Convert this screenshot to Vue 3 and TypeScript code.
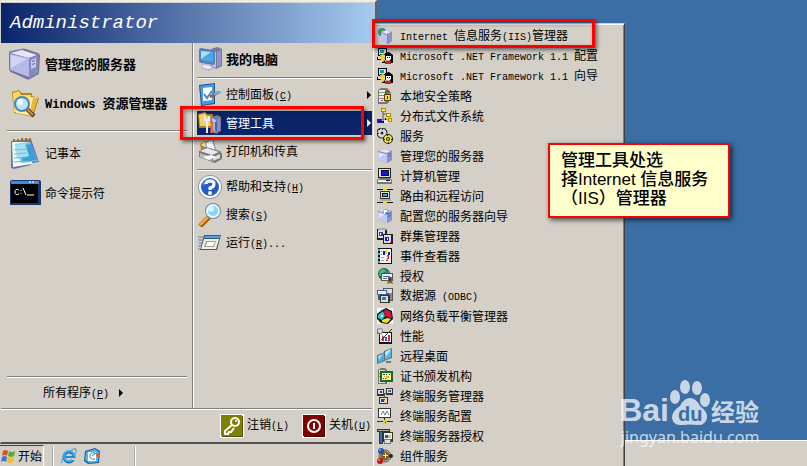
<script setup lang="ts">
import { defineComponent, h } from 'vue'

type Shape = [fill: string, d: string, stroke?: string, width?: number]

const rect = (x: number, y: number, w: number, ht: number) => `M${x} ${y}h${w}v${ht}h${-w}z`
const circle = (x: number, y: number, r: number) =>
  `M${x - r} ${y}a${r} ${r} 0 1 0 ${2 * r} 0a${r} ${r} 0 1 0 ${-2 * r} 0z`

const tower: Shape[] = [
  ['#8583a8', 'M1 3l7-2 7 2v9l-5 3-9-3z'],
  ['#e4e6fb', 'M1 3l7-2 6 2-4 2z'],
  ['#c4c8f0', 'M1 4l9 2v9l-9-3z'],
  ['#8d90cf', 'M10 5l5-2v9l-5 3z'],
  ['#e2e4fb', 'M2 5l6 1-6 4z'],
  ['#6467ae', 'M11 6l3-1v1l-3 1zM11 8l3-1v1l-3 1z'],
]

const small: Record<string, Shape[]> = {
  iis: [
    ['#2a77c9', circle(5, 4, 4)],
    ['#3da53a', 'M1 3l3-3 3 2-2 3-3 1z'],
    ['#8583a8', 'M4 4l6-2 5 2v9l-4 3-7-3z'], ['#e4e6fb', 'M4 4l6-2 4 2-4 2z'],
    ['#bec2ee', 'M4 5l6 2v9l-6-3z'], ['#8d90cf', 'M11 6l4-2v9l-4 3z'],
  ],
  net: [
    ['#000', rect(1, 0, 9, 8)], ['#ddd', rect(2, 1, 7, 6)], ['#08a0a8', rect(3, 2, 4, 3)],
    ['#000', 'M0 9h3V6h5v9H5v-3H0z'], ['#f4d331', 'M3 7l3-1 2 1v5l-2 2H4z'], ['#ddd', rect(1, 9, 3, 2)],
    ['#000', 'M8 5l4-1 4 3v8h-2l-2-2-4-1z'], ['#fff', 'M9 8h5v3l-2 2-3-1z'],
    ['#000', 'M10 9h1v1h-1zM12 9h1v1h-1z'], ['#d71920', 'M9 13h5v3H8v-2z'],
  ],
  security: [
    ['#777', 'M1 2l3-2h6l2 2v12l-2 2H1z'], ['#eee', rect(2, 2, 6, 12)],
    ['#888', 'M2 4h6v1H2zM2 7h6v1H2zM2 10h6v1H2z'], ['#e02020', rect(4, 12, 2, 1)],
    ['none', 'M9 7V4q2-3 4 0v3', '#554600', 1], ['#554600', rect(7, 6, 7, 7)],
    ['#f5dc45', rect(8, 7, 5, 5)], ['#222', rect(10, 8, 1, 3)],
  ],
  dfs: [
    ['none', 'M6 3v9M6 6h5M6 12h6', '#555', 1], ['#ad8d00', 'M4 0h5v4H4zM9 5h5v4H9zM11 10h4v4h-4z'],
    ['#fff047', 'M5 1h3v2H5zM10 6h3v2h-3zM12 11h2v2h-2z'], ['#1515c9', rect(0, 11, 5, 4)],
    ['#111', 'M5 13h3v-3h1v3h3v2H5z'], ['#eee', 'M7 12h3l2 2v1H7z'],
  ],
  services: [
    ['none', circle(5, 5, 3), '#222', 5], ['none', circle(5, 5, 3), '#ddd', 3], ['#222', circle(5, 5, 1)],
    ['#222', 'M5 0h1v2H5zM0 5h2v1H0zM2 1h1v1H2zM8 1h1v1H8z'],
    ['none', circle(11, 11, 3), '#222', 4], ['none', circle(11, 11, 3), '#f4e62a', 2],
    ['#222', 'M10 6h1v2h-1zM6 11h2v1H6zM14 11h2v1h-2zM11 14h1v2h-1z'],
  ],
  server: tower,
  computer: [
    ['#222', rect(1, 0, 13, 10)], ['#ddd', rect(2, 1, 11, 8)], ['#111', rect(4, 2, 8, 6)], ['#1218d7', rect(5, 3, 6, 4)],
    ['#777', 'M3 10h10l2 2v4H0v-4z'], ['#eee', rect(1, 12, 13, 2)], ['#111', rect(9, 12, 4, 1)], ['#20b34a', rect(2, 14, 2, 1)],
  ],
  routing: [
    ['#111', 'M0 1h16v1H0zM0 14h16v1H0zM8 2h1v12H8z'], ['#e9df28', 'M6 0h4v3H6zM6 13h4v3H6z'],
    ['#333', rect(3, 3, 10, 8)], ['#ddd', rect(4, 4, 8, 6)], ['#111', rect(5, 5, 6, 4)], ['#2fb8b8', rect(6, 6, 4, 2)],
    ['#aaa', rect(3, 11, 11, 2)],
  ],
  wizard: [...tower, ['#64b3e1', circle(9, 4, 3)], ['#fff', 'M7 2h3v2H8v2H7z'], ['#2a78b5', 'M9 5h3v1H9z']],
  cluster: [
    ['#222', rect(0, 1, 10, 11)], ['#ddd', rect(1, 2, 7, 8)], ['#2c42a8', rect(2, 4, 4, 4)], ['#aaa', 'M1 2l2-2h7v2z'],
    ['#222', rect(6, 6, 10, 10)], ['#ddd', rect(7, 7, 7, 8)], ['#171fbc', rect(8, 9, 4, 4)], ['#fff', rect(3, 5, 1, 2)],
    ['#fff', rect(10, 10, 1, 2)], ['#d22', rect(13, 14, 1, 1)],
  ],
  events: [
    ['#111', rect(1, 0, 14, 16)], ['#fff', rect(3, 1, 11, 14)],
    ['#31aaba', 'M1 1h2v2H1zM1 5h2v2H1zM1 9h2v2H1zM1 13h2v2H1z'], ['#1717c7', 'M6 3h2v4H6zM11 4h2v3h-2z'],
    ['#e7d500', 'M8 2h2v4H8zM9 11h2v2H9z'], ['#d31515', 'M10 7h2v4h-2v-1h1zM9 12h2v1H9z'],
    ['#999', 'M4 3h1v1H4zM4 6h1v1H4zM4 9h3v1H4zM4 12h3v1H4z'],
  ],
  license: [
    ['#176945', circle(7, 6, 6)], ['#55bd71', 'M3 2l4-1 2 2-3 2-1 4-3-2z'], ['#2789b1', 'M9 1l3 3-2 3-2-2z'],
    ['#555', rect(4, 5, 12, 8)], ['#eef4fa', rect(5, 6, 10, 6)], ['#5465aa', 'M6 8h7v1H6zM6 10h4v1H6z'],
    ['#886600', 'M11 9h4v4l1 3-3-1-3 1 1-3z'], ['#24346d', rect(12, 10, 2, 3)],
  ],
  odbc: [
    ['#555', rect(6, 0, 10, 13)], ['#ddd', rect(7, 1, 8, 4)], ['#888', rect(12, 5, 3, 7)],
    ['#3e5f9b', rect(0, 2, 10, 5)], ['#eef', rect(1, 3, 8, 3)], ['#333', rect(3, 7, 10, 8)],
    ['#ddd', rect(4, 8, 7, 6)], ['#2787bd', rect(5, 9, 4, 3)], ['#e22', rect(12, 13, 1, 1)], ['#555', 'M1 7h2v5H1z'],
  ],
  balance: [
    ['#fff', rect(0, 0, 16, 16)], ['#111', 'M5 2l4-2 6 3 1 8-5 5-7-1-4-4V6z'], ['#28cbd5', 'M1 7l5-4 2 5-3 4-4-2z'],
    ['#d71543', 'M8 1l6 3 1 6-6-1-2-5z'], ['#efe02f', 'M5 12l5-2 4 1-4 4-5-1z'], ['#fff', rect(4, 7, 2, 2)],
  ],
  performance: [
    ['#666', 'M0 1h3l3 3h9v12H2V6H0z'], ['#111', rect(2, 4, 13, 12)], ['#fff', rect(3, 5, 11, 9)],
    ['#d62b2b', 'M5 8h2v5H5zM11 7h2v6h-2z'], ['#2634c8', 'M8 9h2v4H8z'], ['none', 'M3 5l9 9', '#c5b820', 1],
    ['none', 'M4 12l8-8 3-3', '#333', 1], ['#888', circle(3, 3, 3)], ['#ddd', circle(3, 3, 2)],
  ],
  remote: [
    ['#5a7580', 'M7 3l8-3v10l-8 3z'], ['#5db6e4', 'M8 4l6-3v8l-6 3z'], ['#bceaff', 'M8 4l6-3-5 8z'],
    ['#557580', 'M0 7l8-3v9l-8 3z'], ['#4baee1', 'M1 8l6-3v7l-6 3z'], ['#a2dcf7', 'M1 8l5-2-4 6z'], ['#777', rect(9, 13, 5, 2)],
  ],
  cert: [
    ['#777', 'M1 2l3-2h4l2 2v14H1z'], ['#ddd', rect(2, 2, 6, 13)], ['#888', 'M2 5h5v1H2zM2 8h5v1H2z'],
    ['#176b22', rect(3, 3, 13, 11)], ['#fff9ae', rect(5, 5, 9, 7)], ['#333', 'M6 6h2v1H6zM9 6h1v1H9zM12 6h1v1h-1zM6 10h1v1H6zM8 10h1v1H8z'],
    ['#d8bd22', 'M9 8h3v2H9zM7 8h1v1H7z'],
  ],
  tsmanager: [
    ['#333', 'M0 1h7v7H0zM9 0h7v7H9zM2 9h9v7H2z'], ['#ddd', 'M1 2h5v4H1zM10 1h5v4h-5zM3 10h7v5H3z'],
    ['#2937bc', 'M3 3h2v2H3zM11 2h3v2h-3zM4 11h4v3H4z'], ['#3ba047', rect(11, 2, 2, 2)],
    ['#555', 'M6 5h4v1H8v4H7V6H6z'], ['#e5bd29', rect(7, 12, 1, 2)],
  ],
  tsconfig: [
    ['#333', rect(1, 0, 13, 10)], ['#fff', rect(2, 1, 11, 8)], ['none', 'M4 7l2-4 2 4M8 7l2-4 2 4', '#777', 1],
    ['#333', 'M7 10h1v3H7zM0 13h16v1H0z'], ['#ddd438', rect(6, 12, 4, 4)], ['#333', rect(8, 14, 1, 1)],
  ],
  tslicense: [
    ['#333', 'M0 1h13v3H6v12H2V4H0z'], ['#aaa', rect(1, 2, 11, 1)], ['#2c6db8', rect(3, 4, 2, 11)],
    ['#333', rect(6, 4, 10, 10)], ['#eef', rect(7, 5, 8, 6)], ['#2850b1', rect(8, 7, 3, 3)],
    ['#d8cb2d', rect(11, 7, 3, 3)], ['#777', rect(7, 11, 7, 5)], ['#ddd', rect(8, 12, 5, 3)],
  ],
  component: [
    ['none', circle(8, 8, 6), '#555', 1], ['#777', circle(8, 8, 5)], ['#8b5d13', circle(8, 8, 4)],
    ['#fff3a0', 'M8 5h1v2h2v1H9v2H8V8H6V7h2z'], ['#214fa8', circle(4, 3, 3)], ['#bd1717', circle(3, 13, 3)],
    ['#222', circle(14, 8, 2)], ['#89b6ee', circle(3, 2, 1)], ['#ff8a79', circle(2, 12, 1)],
  ],
}

const large: Record<string, Shape[]> = {
  server: [
    ['#77759d', 'M0 5q0-2 2-2L12 1q3-1 5 0l12 4q2 1 2 3l-1 17q0 2-2 2l-7 4q-2 1-4 0L2 24q-2-1-2-3z'],
    ['#e4e6fb', 'M1 5l12-3 15 5-8 3z'], ['#b6b9e5', 'M1 6l19 4v20L1 22z'], ['#8688c4', 'M20 10l9-3v18l-9 5z'],
    ['#d2d4f4', 'M2 7l16 4-16 9z'], ['#c5c8f0', 'M22 12l5-2v9l-5 2z'], ['#6063a0', 'M23 13l3-1v1l-3 1zM23 16l3-1v1l-3 1z'],
    ['#53d352', circle(27, 23, 1)], ['#71719a', 'M1 22l19 7v1L2 24z'],
  ],
  explorer: [
    ['#b98212', 'M3 4l7-2 3 3h10v3l7 2-6 19-19-4z'], ['#fbd967', 'M4 5l6-2 2 4h10l-2 20-15-3z'],
    ['#ffeea5', 'M9 10l20-1-6 19-16-3z'], ['#e8b83a', 'M24 10l5-1-6 19-3-1z'],
    ['#4c84b3', circle(13, 16, 8)], ['#b7e5fc', circle(13, 16, 6)], ['#effbff', circle(11, 14, 3)],
    ['none', 'M18 21l7 7', '#5a3e23', 4], ['none', 'M18 21l6 6', '#c59251', 2],
  ],
  notepad: [
    ['#6673b0', 'M2 4l20-2 8 23-7 1-1 2-17 4-3-1z'], ['#eef9f2', 'M3 5h18l2 22-19 3z'],
    ['#77c4e7', 'M6 7l15-2 8 19-17 2z'], ['#3a9fd7', 'M11 9l11-2 6 16-14 2z'], ['#a5e1f3', 'M6 8l10-2 4 13-12 3z'],
    ['none', 'M5 13l13-1M5 17l13-1M5 21l13-1M5 25l13-1', '#81bdaa', 1],
    ['none', 'M5 5V2M9 5V2M13 4V1M17 4V1M21 4V1', '#9b7524', 2],
  ],
  cmd: [
    ['#16386e', 'M1 5q0-2 2-2h27q2 0 2 2v23H1z'], ['#398de0', rect(2, 4, 28, 3)],
    ['#9ed1ff', 'M20 4h2v2h-2zM23 4h2v2h-2z'], ['#e95b38', rect(26, 4, 3, 2)], ['#000', rect(2, 7, 27, 19)],
    ['none', 'M10 13q-4-2-4 2t4 2M12 13v1M12 16v1M14 11l3 7M18 18h7', '#fff', 1],
  ],
}

const medium: Record<string, Shape[]> = {
  pc: [
    ['#7776a3', 'M13 2l6-2 5 2v17l-6 3-5-3z'], ['#bdc0ea', 'M14 3l4 2v16l-4-2z'], ['#9194ca', 'M19 5l4-2v15l-4 2z'],
    ['#5781b5', 'M1 3q0-2 2-2l12 2q2 0 2 2v11q0 2-2 2L3 16q-2 0-2-2z'], ['#4ca6eb', 'M3 4l12 1v10L3 13z'],
    ['#a7def9', 'M3 4l10 1-10 7z'], ['#b4b5c8', 'M4 17l9 1 3 3-5 3-8-3z'], ['#eef', 'M5 18l7 1 2 2-4 1-6-2z'],
  ],
  control: [
    ['#195497', 'M1 2l16-2v21L3 23z'], ['#4d9cda', 'M2 3l14-2v19L4 22z'], ['#fff', 'M5 5l9-1v13l-9 1z'],
    ['none', 'M6 11l3 4 5-7', '#4d88c7', 2], ['none', 'M12 14l9-5', '#c35325', 3], ['none', 'M16 11l7-2', '#65b8eb', 2],
  ],
  tools: [
    ['#b0801f', 'M0 3l7-2 2 2h6v14H1z'], ['#f6cf64', 'M1 4l6-2 2 3h5v10H2z'], ['#7675a5', 'M14 6l5-2 4 2v14l-5 3-5-3z'],
    ['#b8bce9', 'M14 7l4 2v12l-4-2z'], ['#888bc5', 'M19 9l3-2v12l-3 2z'],
    ['none', 'M9 9v13M7 5v4h4V5', '#e9edf2', 2], ['none', 'M14 11v11', '#df7040', 3], ['none', 'M13 5v7', '#555', 1],
    ['none', 'M18 11v9', '#2b6caf', 2],
  ],
  printer: [
    ['#ad8840', 'M2 5l4-3 4 1v8H3z'], ['#ffe395', 'M3 6l3-3 3 1v5z'], ['#718ba8', 'M7 3l8-3 3 11-9 2z'], ['#fff', 'M8 4l6-3 3 10-7 1z'],
    ['#777', 'M1 12l7-4 14 4 2 3v5l-7 4-16-6z'], ['#e9e9e9', 'M2 12l7-3 12 4-7 3z'], ['#bbb', 'M2 14l12 4v4L2 18z'],
    ['#ddd', 'M15 18l7-3v4l-7 3z'], ['#fff', 'M5 18l8-2 5 2-8 3z'],
  ],
  help: [
    ['#8c98ad', circle(12, 12, 12)], ['#fff', circle(12, 12, 11)], ['#245bc8', circle(12, 12, 9)],
    ['#5c8fea', 'M5 8q7-8 14 0-6-3-14 3z'],
    ['none', 'M8 9q0-3 4-3t4 3-4 4v2', '#fff', 3], ['#fff', circle(12, 18, 2)],
  ],
  search: [
    ['none', 'M11 14l-9 9', '#92541a', 5], ['none', 'M10 14l-8 8', '#f5a73c', 3],
    ['#74869b', circle(15, 8, 8)], ['#e5faff', circle(15, 8, 7)], ['#8bd2f4', circle(15, 8, 5)], ['#d4f5ff', circle(13, 6, 3)],
  ],
  run: [
    ['none', 'M0 6h6M0 9h5M1 12h5M0 15h4M0 18h3', '#6e7f94', 1], ['#365e8a', 'M6 4h17l-4 15H2z'],
    ['#4fa2e6', 'M7 5h15v2H6z'], ['#f2eee0', 'M6 8h15l-3 10H3z'], ['#a5a08f', 'M8 10h10l-2 6H6z'], ['#fff', 'M9 11h8l-2 4H8z'],
  ],
  key: [
    ['#fff', rect(0, 0, 24, 24)], ['#53530a', rect(2, 2, 21, 21)], ['#808000', rect(1, 1, 21, 21)],
    ['none', 'M12 11l-7 6v3h3l1-2h2l3-4', '#fff', 2], ['none', circle(15, 8, 4), '#fff', 2], ['#fff', circle(16, 7, 1)],
  ],
  power: [
    ['#fff', rect(0, 0, 24, 24)], ['#480000', rect(2, 2, 21, 21)], ['#800000', rect(1, 1, 21, 21)],
    ['none', circle(12, 12, 6), '#fff', 2], ['#fff', rect(11, 9, 2, 6)],
  ],
}

const bar: Record<string, Shape[]> = {
  flag: [
    ['#df5125', 'M3 3q3-2 5 0L7 8Q5 6 2 8z'], ['#58ad34', 'M9 3q3 2 6 0l-1 5q-3 2-6 0z'],
    ['#3976d5', 'M2 9q3-2 5 0l-1 5q-3-2-5 0z'], ['#efbd2d', 'M8 9q3 2 6 0l-1 5q-3 2-6 0z'],
  ],
  ie: [
    ['none', circle(8, 9, 5), '#176ebb', 3], ['none', circle(8, 8, 5), '#40b0ed', 2], ['#248cd5', rect(4, 8, 10, 2)],
    ['#d4d0c8', rect(11, 10, 5, 2)], ['none', 'M1 15Q-1 12 7 5t8-3q1 1-1 4', '#249be2', 1],
  ],
  mail: [
    ['#145f9f', 'M1 3l10-3 5 3-1 12-11 1-4-3z'], ['#54b4e9', 'M2 4l9-3 4 3-1 10-9 1-4-3z'], ['#fff', 'M4 4h8v9H4z'],
    ['none', 'M11 5Q6 4 6 8t5 3M8 8l4-3', '#247fc0', 1], ['#e56125', circle(14, 7, 2)],
  ],
}

const Icon = defineComponent({
  props: { shapes: { type: Array as () => Shape[], required: true }, size: { type: Number, required: true } },
  setup: (p) => () =>
    h('svg', { width: p.size, height: p.size, viewBox: `0 0 ${p.size} ${p.size}`, 'aria-hidden': 'true' },
      p.shapes.map(([fill, d, stroke, width]) => h('path', { fill, d, stroke, 'stroke-width': width }))),
})

/* Splits a label into Latin and Chinese runs; "&" marks the access key. */
const Label = defineComponent({
  props: { text: { type: String, required: true } },
  setup: (p) => () =>
    h('span', { class: 'label' }, (p.text.match(/&.|[\x20-\x25\x27-\x7e]+|[^\x20-\x7e]+/g) ?? []).map((run) =>
      run[0] === '&' ? h('u', { class: 'latin' }, run[1])
        : /^[\x20-\x7e]/.test(run) ? h('span', { class: 'latin' }, run) : run)),
})

const pinned = [
  { icon: 'server', text: '管理您的服务器' },
  { icon: 'explorer', text: 'Windows 资源管理器' },
]
const recent = [
  { icon: 'notepad', text: '记事本' },
  { icon: 'cmd', text: '命令提示符' },
]
const places = [
  [{ icon: 'pc', text: '我的电脑', bold: true }],
  [
    { icon: 'control', text: '控制面板(&C)', arrow: true },
    { icon: 'tools', text: '管理工具', arrow: true, active: true },
    { icon: 'printer', text: '打印机和传真' },
  ],
  [
    { icon: 'help', text: '帮助和支持(&H)' },
    { icon: 'search', text: '搜索(&S)' },
    { icon: 'run', text: '运行(&R)...' },
  ],
] as { icon: string; text: string; bold?: boolean; arrow?: boolean; active?: boolean }[][]

const tools = [
  ['iis', 'Internet 信息服务(IIS)管理器'],
  ['net', 'Microsoft .NET Framework 1.1 配置'],
  ['net', 'Microsoft .NET Framework 1.1 向导'],
  ['security', '本地安全策略'],
  ['dfs', '分布式文件系统'],
  ['services', '服务'],
  ['server', '管理您的服务器'],
  ['computer', '计算机管理'],
  ['routing', '路由和远程访问'],
  ['wizard', '配置您的服务器向导'],
  ['cluster', '群集管理器'],
  ['events', '事件查看器'],
  ['license', '授权'],
  ['odbc', '数据源 (ODBC)'],
  ['balance', '网络负载平衡管理器'],
  ['performance', '性能'],
  ['remote', '远程桌面'],
  ['cert', '证书颁发机构'],
  ['tsmanager', '终端服务管理器'],
  ['tsconfig', '终端服务配置'],
  ['tslicense', '终端服务器授权'],
  ['component', '组件服务'],
]
</script>

<template>
  <div class="desktop">
    <footer class="taskbar">
      <button class="start"><Icon :shapes="bar.flag" :size="16" />开始</button>
      <div class="quick">
        <button aria-label="Internet Explorer"><Icon :shapes="bar.ie" :size="16" /></button>
        <button aria-label="Outlook Express"><Icon :shapes="bar.mail" :size="16" /></button>
      </div>
    </footer>

    <nav class="menu">
      <header>Administrator</header>
      <div class="panes">
        <section class="left">
          <button v-for="i in pinned" :key="i.icon" class="big bold"><Icon :shapes="large[i.icon]" :size="32" /><Label :text="i.text" /></button>
          <hr>
          <button v-for="i in recent" :key="i.icon" class="big"><Icon :shapes="large[i.icon]" :size="32" /><Label :text="i.text" /></button>
          <hr class="last">
          <button class="all"><Label text="所有程序(&P)" /><i class="arrow" /></button>
        </section>
        <section class="right">
          <template v-for="(group, g) in places" :key="g">
            <hr v-if="g">
            <button v-for="i in group" :key="i.icon" class="place" :class="{ bold: i.bold, active: i.active }">
              <Icon :shapes="medium[i.icon]" :size="24" /><Label :text="i.text" /><i v-if="i.arrow" class="arrow" />
            </button>
          </template>
        </section>
      </div>
      <div class="session">
        <button><Icon :shapes="medium.key" :size="24" /><Label text="注销(&L)" /></button>
        <button><Icon :shapes="medium.power" :size="24" /><Label text="关机(&U)" /></button>
      </div>
    </nav>

    <nav class="submenu">
      <button v-for="([icon, text], n) in tools" :key="n"><Icon :shapes="small[icon]" :size="16" /><Label :text="text" /></button>
    </nav>

    <div class="watermark">
      <div class="brand">
        <span>Bai</span>
        <span class="paw">
          <svg width="42" height="46" viewBox="0 0 42 46" aria-hidden="true">
            <ellipse cx="6" cy="17" rx="5" ry="7" />
            <ellipse cx="16" cy="7" rx="5" ry="7" />
            <ellipse cx="28" cy="8" rx="5" ry="7" />
            <ellipse cx="36" cy="20" rx="5" ry="7" />
            <path d="M21 18Q27 18 31 26Q39 32 38 38Q36 46 28 45Q21 44 14 45Q4 46 3 38Q3 31 11 26Q15 18 21 18Z" />
          </svg>
          <b>du</b>
        </span>
        <span class="jy">经验</span>
      </div>
      <div class="url">jingyan.baidu.com</div>
    </div>

    <div class="mark mark-tools" />
    <div class="mark mark-iis" />
    <p class="note">管理工具处选<br>择Internet 信息服务<br>（IIS）管理器</p>
  </div>
</template>

<style>
body {
  margin: 0;
}
</style>

<style scoped>
.desktop {
  position: relative;
  display: flex;
  flex-direction: column;
  justify-content: flex-end;
  height: 100vh;
  overflow: hidden;
  background: #3a6ea5;
  color: #000;
  font: 12px/16px "Noto Sans CJK SC", sans-serif;
}
button {
  display: flex;
  align-items: center;
  margin: 0;
  padding: 0;
  border: 0;
  background: none;
  color: inherit;
  font: inherit;
  text-align: left;
  white-space: pre;
}
svg {
  flex: none;
}
hr {
  align-self: stretch;
  height: 0;
  margin: 0;
  border: solid;
  border-width: 1px 0;
  border-color: #808080 transparent #fff;
}
:deep(.latin) {
  font-family: "Liberation Mono", monospace;
  font-size: 10px;
}
.bold {
  font-size: 13px;
  font-weight: bold;
}
.bold :deep(.latin) {
  font-size: 12px;
}

.taskbar {
  display: flex;
  align-items: flex-end;
  gap: 8px;
  height: 24px;
  padding-top: 1px;
  border-top: 1px solid #fff;
  background: #d4d0c8;
}
.start {
  gap: 2px;
  height: 21px;
  padding-right: 1px;
  border: 1px solid #404040;
  border-width: 1px 1px 0 0;
  border-right-color: #fff;
}
.quick {
  display: flex;
  align-items: center;
  gap: 7px;
  width: 73px;
  height: 20px;
  padding-left: 7px;
  border: 2px groove #fff;
  border-width: 0 2px;
}

.menu {
  position: absolute;
  top: 0;
  bottom: 22px;
  left: 0;
  display: flex;
  flex-direction: column;
  box-sizing: border-box;
  width: 377px;
  padding-top: 1px;
  border: 1px solid #d4d0c8;
  border-top: 2px solid #eeece8;
  border-right: 2px solid #606060;
  border-bottom: 2px solid #505050;
  background: #d4d0c8;
}
.menu header {
  padding-left: 9px;
  background: linear-gradient(90deg, #0a246a, #a6caf0);
  color: #fff;
  font: italic 19px/40px "Liberation Mono", monospace;
}
.panes {
  display: flex;
  flex: 1;
}
.left {
  display: flex;
  flex-direction: column;
  width: 180px;
  padding: 1px 5px 0 6px;
  border-right: 1px solid #808080;
}
.big {
  gap: 4px;
  height: 40px;
  padding-left: 2px;
}
.left hr {
  margin: 6px 0 1px;
}
.left .last {
  margin: auto 0 0;
}
.all {
  gap: 10px;
  height: 30px;
  padding-left: 36px;
}
.right {
  display: flex;
  flex: 1;
  flex-direction: column;
  gap: 4px;
  padding: 4px 2px 0 3px;
  border-left: 1px solid #fff;
}
.right hr {
  margin-top: 2px;
}
.place {
  gap: 4px;
  height: 24px;
  padding: 0 2px 0 1px;
}
.place .arrow {
  margin-left: auto;
}
.active {
  background: #0a246a;
  color: #fff;
}
.arrow {
  border: solid transparent;
  border-width: 4px 0 4px 4px;
  border-left-color: currentColor;
}
.session {
  display: flex;
  align-items: center;
  justify-content: flex-end;
  gap: 13px;
  height: 33px;
  padding: 0 4px;
  border-top: 1px solid #808080;
  box-shadow: inset 0 1px #fff;
}
.session button {
  gap: 3px;
}

.submenu {
  position: absolute;
  top: 23px;
  left: 372px;
  display: flex;
  flex-direction: column;
  box-sizing: border-box;
  width: 253px;
  padding: 2px;
  border: 1px solid #d4d0c8;
  border-right-color: #404040;
  background: #d4d0c8;
  box-shadow: inset 1px 1px #fff, inset -1px 0 #808080;
}
.submenu button {
  gap: 7px;
  height: 20px;
  padding-left: 2px;
}

.mark {
  position: absolute;
  box-sizing: border-box;
  border: 3px solid #f00;
  box-shadow: 2px 2px 4px #0008, inset 2px 2px 4px #0006;
}
.mark-tools {
  top: 106px;
  left: 180px;
  width: 184px;
  height: 34px;
}
.mark-iis {
  top: 19px;
  left: 372px;
  width: 223px;
  height: 29px;
}
.note {
  position: absolute;
  top: 143px;
  left: 548px;
  box-sizing: border-box;
  width: 182px;
  margin: 0;
  padding: 6px 11px 8px;
  border: 2px solid #f00;
  background: #ffc;
  box-shadow: 2px 2px 5px #000a;
  font: 500 17px/19px "Liberation Sans", "Noto Sans CJK SC", sans-serif;
  white-space: nowrap;
}

.watermark {
  position: absolute;
  right: 46px;
  bottom: 18px;
  color: #fff;
  opacity: 0.72;
}
.brand {
  display: flex;
  align-items: flex-end;
  justify-content: flex-end;
  height: 46px;
  padding-right: 2px;
  font: bold 32px/32px "Liberation Sans", sans-serif;
}
.paw {
  position: relative;
  height: 46px;
}
.paw svg {
  display: block;
  fill: #fff;
}
.paw b {
  position: absolute;
  bottom: 0;
  left: 9px;
  color: #3a6ea5;
  font-size: 20px;
  line-height: 24px;
}
.jy {
  font: bold 24px/30px "Noto Sans CJK SC", sans-serif;
}
.url {
  font: 16px/22px "Noto Sans", sans-serif;
  text-align: center;
}
</style>
